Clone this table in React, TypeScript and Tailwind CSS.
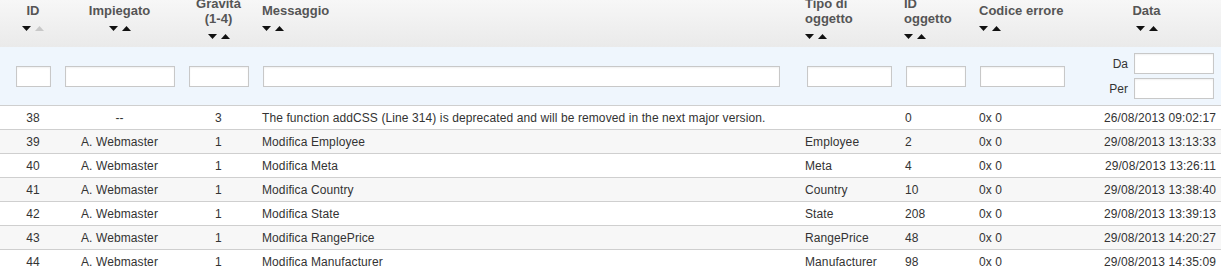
import React from "react";

const cols = "grid pl-2 grid-cols-[50px_123px_75px_543px_99px_75px_99px_1fr]";

const rows = [
  { id: 38, emp: "--", grav: 3, msg: "The function addCSS (Line 314) is deprecated and will be removed in the next major version.", type: "", objId: "0", code: "0x 0", date: "26/08/2013 09:02:17" },
  { id: 39, emp: "A. Webmaster", grav: 1, msg: "Modifica Employee", type: "Employee", objId: "2", code: "0x 0", date: "29/08/2013 13:13:33" },
  { id: 40, emp: "A. Webmaster", grav: 1, msg: "Modifica Meta", type: "Meta", objId: "4", code: "0x 0", date: "29/08/2013 13:26:11" },
  { id: 41, emp: "A. Webmaster", grav: 1, msg: "Modifica Country", type: "Country", objId: "10", code: "0x 0", date: "29/08/2013 13:38:40" },
  { id: 42, emp: "A. Webmaster", grav: 1, msg: "Modifica State", type: "State", objId: "208", code: "0x 0", date: "29/08/2013 13:39:13" },
  { id: 43, emp: "A. Webmaster", grav: 1, msg: "Modifica RangePrice", type: "RangePrice", objId: "48", code: "0x 0", date: "29/08/2013 14:20:27" },
  { id: 44, emp: "A. Webmaster", grav: 1, msg: "Modifica Manufacturer", type: "Manufacturer", objId: "98", code: "0x 0", date: "29/08/2013 14:35:09" },
];

function SortArrows({ dimUp }: { dimUp?: boolean }) {
  return (
    <div className="flex gap-[4px] mt-[8px] h-[5px] shrink-0">
      <svg width="9" height="5" viewBox="0 0 9 5">
        <path d="M0 0H9L4.5 5Z" className="fill-[#111]" />
      </svg>
      <svg width="9" height="5" viewBox="0 0 9 5">
        <path d="M0 5H9L4.5 0Z" className={dimUp ? "fill-[#c8c8c8]" : "fill-[#111]"} />
      </svg>
    </div>
  );
}

function HeadCell({ lines, center, dimUp }: { lines: string[]; center?: boolean; dimUp?: boolean }) {
  return (
    <div className={`flex flex-col justify-center min-h-0 px-[6px] ${center ? "items-center text-center" : "items-start"}`}>
      {lines.map((l) => (
        <span key={l} className="leading-[15px] whitespace-nowrap shrink-0">{l}</span>
      ))}
      <SortArrows dimUp={dimUp} />
    </div>
  );
}

function FilterInput({ w }: { w: string }) {
  return (
    <input
      type="text"
      className={`${w} h-[21px] bg-white border border-[#c8c8c8] shadow-[inset_0_1px_2px_rgba(0,0,0,0.06)] outline-none`}
    />
  );
}

export default function App() {
  return (
    <div className="w-[1221px] h-[273px] overflow-hidden bg-white text-[12px] text-[#333] font-['Liberation_Sans',Arial,sans-serif]">
      {/* Header */}
      <div className={`${cols} grid-rows-[34px] h-[47px] bg-gradient-to-b from-[#f7f7f7] to-[#eaeaea] text-[13px] font-bold text-[#555]`}>
        <HeadCell lines={["ID"]} center dimUp />
        <HeadCell lines={["Impiegato"]} center />
        <HeadCell lines={["Gravità", "(1-4)"]} center />
        <HeadCell lines={["Messaggio"]} />
        <HeadCell lines={["Tipo di", "oggetto"]} />
        <HeadCell lines={["ID", "oggetto"]} />
        <HeadCell lines={["Codice errore"]} />
        <HeadCell lines={["Data"]} center />
      </div>

      {/* Filters */}
      <div className={`${cols} h-[59px] bg-[#eff6fd] border-b border-[#cfcfcf] items-center`}>
        <div className="flex justify-center"><FilterInput w="w-[35px]" /></div>
        <div className="flex justify-center"><FilterInput w="w-[110px]" /></div>
        <div className="flex justify-center"><FilterInput w="w-[60px]" /></div>
        <div className="pl-[7px]"><FilterInput w="w-[517px]" /></div>
        <div className="pl-[8px]"><FilterInput w="w-[85px]" /></div>
        <div className="pl-[8px]"><FilterInput w="w-[60px]" /></div>
        <div className="pl-[7px]"><FilterInput w="w-[85px]" /></div>
        <div className="flex flex-col items-end gap-[4px] pr-[7px]">
          <div className="flex items-center gap-[6px]">
            <span>Da</span>
            <FilterInput w="w-[80px]" />
          </div>
          <div className="flex items-center gap-[6px]">
            <span>Per</span>
            <FilterInput w="w-[80px]" />
          </div>
        </div>
      </div>

      {/* Rows */}
      {rows.map((r, i) => (
        <div
          key={r.id}
          className={`${cols} h-[24px] items-center border-b border-[#cfcfcf] whitespace-nowrap tracking-[0.1px] ${i % 2 === 1 ? "bg-[#f7f7f7]" : "bg-white"}`}
        >
          <div className="text-center">{r.id}</div>
          <div className="text-center">{r.emp}</div>
          <div className="text-center">{r.grav}</div>
          <div className="px-[6px]">{r.msg}</div>
          <div className="px-[6px]">{r.type}</div>
          <div className="px-[7px]">{r.objId}</div>
          <div className="px-[6px]">{r.code}</div>
          <div className="text-right pr-[5px]">{r.date}</div>
        </div>
      ))}
    </div>
  );
}
